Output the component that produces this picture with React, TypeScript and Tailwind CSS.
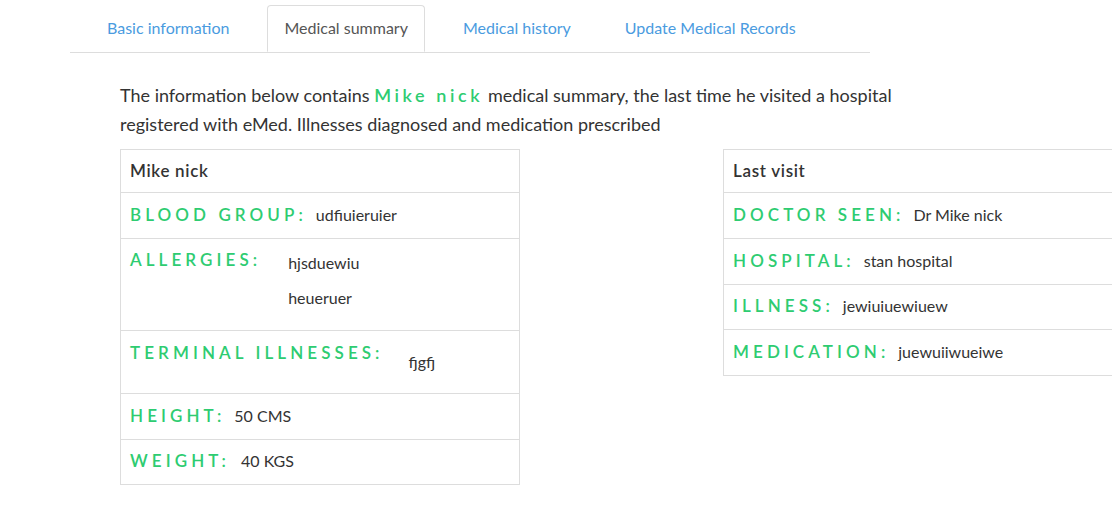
import React from 'react';

const tabs = ['Basic information', 'Medical summary', 'Medical history', 'Update Medical Records'];

const Label = ({ children }: { children: React.ReactNode }) => (
  <span className="text-[17px] font-semibold uppercase tracking-[0.24em] text-[#2ecc71]">{children}</span>
);

const Value = ({ children }: { children: React.ReactNode }) => (
  <span className="text-[16px] text-[#333]">{children}</span>
);

export default function App() {
  return (
    <div className="w-[1112px] h-[509px] overflow-hidden bg-white text-[#333]" style={{ fontFamily: 'Lato, "Noto Sans", sans-serif' }}>
      <div className="ml-[70px] mt-[5px] w-[800px] border-b border-[#ddd] flex gap-[22px] pl-[21px]">
        {tabs.map((t, i) =>
          i === 1 ? (
            <div key={t} className="-mb-px h-[47px] pb-[2px] px-[16px] flex items-center border border-[#ddd] border-b-white rounded-t-[4px] bg-white text-[16px] text-[#555]">{t}</div>
          ) : (
            <div key={t} className="h-[47px] pb-[2px] px-[16px] flex items-center text-[16px] text-[#4a9be0]">{t}</div>
          )
        )}
      </div>

      <div className="ml-[120px] mt-[28px] w-[820px] text-[18px] leading-[29px] text-[#333]">
        The information below contains <span className="font-semibold tracking-[0.2em] text-[#2ecc71]">Mike nick</span> medical summary, the last time he visited a hospital
        <br />
        registered with eMed. Illnesses diagnosed and medication prescribed
      </div>

      <div className="ml-[120px] mt-[10px] flex gap-[203px] items-start">
        <div className="w-[400px] shrink-0 border border-[#ddd]">
          <div className="h-[42px] px-[9px] flex items-center text-[17px] font-semibold tracking-[0.04em] text-[#333]">Mike nick</div>
          <div className="h-[46px] px-[9px] pb-[2px] flex items-center gap-[9px] border-t border-[#ddd]">
            <Label>Blood group:</Label>
            <Value>udfiuieruier</Value>
          </div>
          <div className="h-[92px] px-[9px] pt-[8px] flex items-start gap-[27px] border-t border-[#ddd]">
            <Label>Allergies:</Label>
            <div className="flex flex-col gap-[11px] pt-[4px]">
              <Value>hjsduewiu</Value>
              <Value>heueruer</Value>
            </div>
          </div>
          <div className="h-[63px] px-[9px] pt-[9px] flex items-start gap-[25px] border-t border-[#ddd]">
            <Label>Terminal illnesses:</Label>
            <div className="pt-[10px]"><Value>fjgfj</Value></div>
          </div>
          <div className="h-[46px] px-[9px] pb-[2px] flex items-center gap-[9px] border-t border-[#ddd]">
            <Label>Height:</Label>
            <Value>50 CMS</Value>
          </div>
          <div className="h-[45px] px-[9px] pb-[2px] flex items-center gap-[11px] border-t border-[#ddd]">
            <Label>Weight:</Label>
            <Value>40 KGS</Value>
          </div>
        </div>

        <div className="w-[400px] shrink-0 border border-[#ddd]">
          <div className="h-[42px] px-[9px] flex items-center text-[17px] font-semibold tracking-[0.04em] text-[#333]">Last visit</div>
          <div className="h-[46px] px-[9px] pb-[2px] flex items-center gap-[9px] border-t border-[#ddd]">
            <Label>Doctor seen:</Label>
            <Value>Dr Mike nick</Value>
          </div>
          <div className="h-[46px] px-[9px] pb-[2px] flex items-center gap-[9px] border-t border-[#ddd]">
            <Label>Hospital:</Label>
            <Value>stan hospital</Value>
          </div>
          <div className="h-[45px] px-[9px] pb-[2px] flex items-center gap-[9px] border-t border-[#ddd]">
            <Label>Illness:</Label>
            <Value>jewiuiuewiuew</Value>
          </div>
          <div className="h-[46px] px-[9px] pb-[2px] flex items-center gap-[9px] border-t border-[#ddd]">
            <Label>Medication:</Label>
            <Value>juewuiiwueiwe</Value>
          </div>
        </div>
      </div>
    </div>
  );
}
